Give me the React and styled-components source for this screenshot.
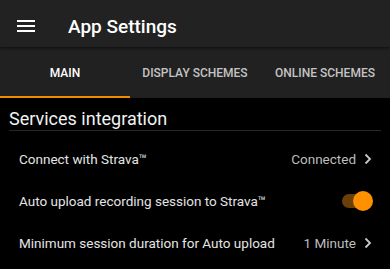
import React, { useState } from 'react'
import styled, { createGlobalStyle } from 'styled-components'

const Global = createGlobalStyle`
  html, body { margin: 0; padding: 0; background: #000; }
  body { font-family: Roboto, "Liberation Sans", sans-serif; }
`

const tabs = ['MAIN', 'DISPLAY SCHEMES', 'ONLINE SCHEMES']

const Chevron = () => (
  <svg width="8" height="12" viewBox="0 0 8 12">
    <path d="M1.5 1.5 L6 6 L1.5 10.5" fill="none" stroke="#c8c8c8" strokeWidth="1.8" />
  </svg>
)

const App = () => {
  const [active, setActive] = useState(0)
  const [auto, setAuto] = useState(true)

  return (
    <Wrapper>
      <Global />
      <Bar>
        <Menu>
          <span />
          <span />
          <span />
        </Menu>
        <Title>App Settings</Title>
      </Bar>
      <Tabs>
        {tabs.map((t, i) => (
          <Tab key={t} active={i === active} onClick={() => setActive(i)}>
            {t}
          </Tab>
        ))}
      </Tabs>
      <Section>
        <SectionTitle>Services integration</SectionTitle>
        <Rows>
          <Row>
            <Label>Connect with Strava™</Label>
            <Value>
              Connected <Chevron />
            </Value>
          </Row>
          <Row>
            <Label>Auto upload recording session to Strava™</Label>
            <Toggle on={auto} onClick={() => setAuto(!auto)}>
              <Knob on={auto} />
            </Toggle>
          </Row>
          <Row>
            <Label>Minimum session duration for Auto upload</Label>
            <Value>
              1 Minute <Chevron />
            </Value>
          </Row>
        </Rows>
      </Section>
    </Wrapper>
  )
}

const Wrapper = styled.div`
  width: 390px;
  height: 269px;
  background: #000;
  overflow: hidden;
`
const Bar = styled.div`
  height: 47px;
  background: #222;
  display: flex;
  align-items: center;
  padding: 5px 0 0 17px;
  box-sizing: border-box;
  box-shadow: 0 1px 3px rgba(0, 0, 0, 0.6);
  position: relative;
  z-index: 1;
`
const Menu = styled.div`
  width: 18px;
  display: flex;
  flex-direction: column;
  gap: 3px;
  span {
    display: block;
    height: 2px;
    background: #fff;
  }
`
const Title = styled.div`
  margin-left: 33px;
  color: #fff;
  font-size: 19px;
  font-weight: 500;
`
const Tabs = styled.div`
  display: flex;
  height: 51px;
  background: #212121;
`
const Tab = styled.div`
  width: 130px;
  display: flex;
  align-items: center;
  justify-content: center;
  font-size: 12px;
  font-weight: 500;
  color: ${(p) => (p.active ? '#fff' : '#c4c4c4')};
  border-bottom: 2px solid ${(p) => (p.active ? '#f08c00' : 'transparent')};
  box-sizing: border-box;
  padding-top: 3px;
  cursor: pointer;
`
const Section = styled.div`
  padding: 10px 9px 0 9px;
`
const SectionTitle = styled.div`
  color: #f2f2f2;
  font-size: 18px;
  padding-bottom: 1px;
  border-bottom: 1px solid #262626;
`
const Rows = styled.div`
  margin-top: 7px;
`
const Row = styled.div`
  height: 42px;
  display: flex;
  align-items: center;
  justify-content: space-between;
  padding: 0 9px 0 10px;
`
const Label = styled.div`
  color: #e4e4e4;
  font-size: 13.5px;
`
const Value = styled.div`
  display: flex;
  align-items: center;
  gap: 8px;
  color: #bdbdbd;
  font-size: 13.5px;
`
const Toggle = styled.div`
  width: 26px;
  height: 14px;
  border-radius: 7px;
  background: ${(p) => (p.on ? '#6b3f08' : '#555')};
  position: relative;
  margin-right: 4px;
  cursor: pointer;
`
const Knob = styled.div`
  width: 20px;
  height: 20px;
  border-radius: 50%;
  background: ${(p) => (p.on ? '#ff9000' : '#ccc')};
  position: absolute;
  top: -3px;
  left: ${(p) => (p.on ? '11px' : '-5px')};
`

export default App
